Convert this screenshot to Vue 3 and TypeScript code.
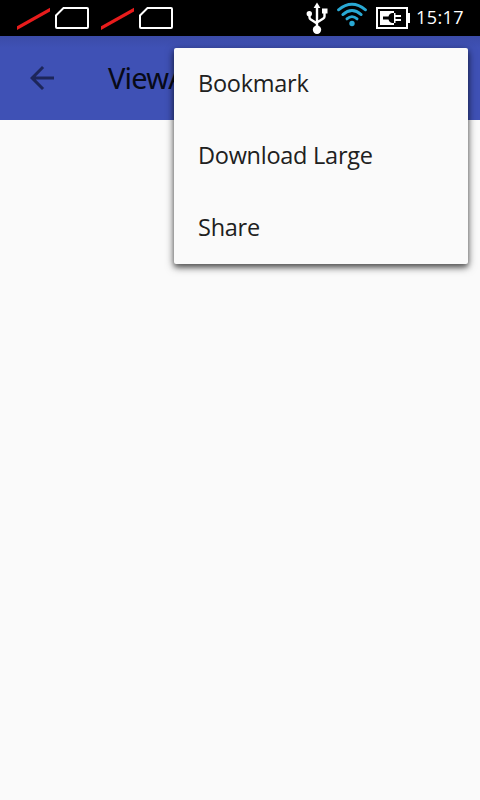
<script setup lang="ts">
const simSlots: number[] = [1, 2]
const menuItems: { id: string; label: string }[] = [
  { id: 'bookmark', label: 'Bookmark' },
  { id: 'download', label: 'Download Large' },
  { id: 'share', label: 'Share' },
]
</script>

<template>
  <div class="screen">
    <header class="status">
      <div class="sims">
        <svg v-for="slot in simSlots" :key="slot" class="sim" width="84" height="36" viewBox="0 0 84 36">
          <path d="M17 26.300 50 7.800V11.500L17 30z" fill="#e81c1c" />
          <path d="M63.500 8H87a1 1 0 0 1 1 1v18a1 1 0 0 1-1 1H57a1 1 0 0 1-1-1V15.500z" stroke="#fff" stroke-width="2" fill="none" />
        </svg>
      </div>
      <svg class="usb" width="24" height="36" viewBox="304 0 24 36">
        <path d="M317 7v23M309.500 14v3.200c0 1 .3 1.500 1 2L317 23.500M324.500 12v4.500c0 1-.4 1.600-1.200 2.100L317 22.500" stroke="#fff" stroke-width="2.400" fill="none" />
        <path d="M317 2.500l3.400 5.500h-6.800z" fill="#fff" />
        <circle cx="309.300" cy="13.700" r="2.700" fill="#fff" />
        <rect x="322" y="8.500" width="5.500" height="5" fill="#fff" />
        <circle cx="317" cy="29.800" r="4.200" fill="#fff" />
      </svg>
      <svg class="wifi" width="32" height="36" viewBox="336 0 32 36">
        <g fill="none" stroke="#29a9d4" stroke-width="2.800" stroke-linecap="round">
          <path d="M338.500 9.800Q352 -1.200 365.500 9.800" />
          <path d="M342.800 14.600Q352 6.500 361.200 14.600" />
          <path d="M346.900 18.900Q352 14.400 357.100 18.900" />
        </g>
        <circle cx="352" cy="23.500" r="2.700" fill="#29a9d4" />
      </svg>
      <svg class="battery" width="36" height="36" viewBox="375 0 36 36">
        <rect x="377" y="8" width="30" height="20" fill="none" stroke="#fff" stroke-width="2" />
        <path d="M408 13h2v10h-2z" fill="#fff" />
        <rect x="380" y="11" width="14" height="14" fill="#fff" />
        <path d="M383 16.500h5.500c.6-2 2-3.500 4-3.500H395v10h-2.500c-2 0-3.400-1.500-4-3.500H383z" fill="#000" />
        <path d="M394 13h1.500v10H394zM395 15h6v2h-6zM395 19h6v2h-6z" fill="#fff" />
      </svg>
      <time class="clock">15:17</time>
    </header>

    <div class="toolbar">
      <svg class="back" width="36" height="36" viewBox="0 0 24 24">
        <path d="M20 11H7.830l5.590-5.590L12 4l-8 8 8 8 1.410-1.410L7.830 13H20v-2z" fill="#1d265a" />
      </svg>
      <h1 class="title">ViewA</h1>
    </div>

    <ul class="menu">
      <li v-for="item in menuItems" :key="item.id" class="item">
        <span class="label">{{ item.label }}</span>
      </li>
    </ul>
  </div>
</template>

<style>
body {
  background: #fafafa;
}
</style>

<style scoped>
.screen {
  position: relative;
  width: 480px;
  height: 800px;
  overflow: hidden;
  background: #fafafa;
  font-family: "Open Sans", "Noto Sans", sans-serif;
}
.status {
  display: flex;
  height: 36px;
  background: #000;
}
.sims {
  display: flex;
  width: 304px;
}
.sim {
  overflow: visible;
}
.usb {
  margin-right: 8px;
}
.wifi {
  margin-right: 7px;
}
.clock {
  margin-left: 5px;
  color: #fff;
  font-size: 18px;
  line-height: 35px;
  letter-spacing: 0.4px;
}
.toolbar {
  display: flex;
  align-items: center;
  height: 84px;
  padding-left: 24px;
  background: linear-gradient(#3b4ba8, #3f51b5 12px);
}
.title {
  margin: 0 0 0 48px;
  color: #080a17;
  font-family: "Noto Sans", sans-serif;
  font-size: 29px;
  font-weight: 400;
  line-height: 40px;
  letter-spacing: -0.8px;
}
.menu {
  position: absolute;
  top: 48px;
  left: 174px;
  width: 294px;
  margin: 0;
  padding: 0;
  list-style: none;
  background: #fafafa;
  border-radius: 2px;
  box-shadow: 0 3px 9px rgba(0, 0, 0, 0.55), 0 3px 5px rgba(0, 0, 0, 0.35);
}
.item {
  display: flex;
  align-items: center;
  box-sizing: border-box;
  height: 72px;
  padding: 0 24px 3px;
  color: #202020;
  font-size: 23.500px;
  letter-spacing: -0.26px;
}
</style>
